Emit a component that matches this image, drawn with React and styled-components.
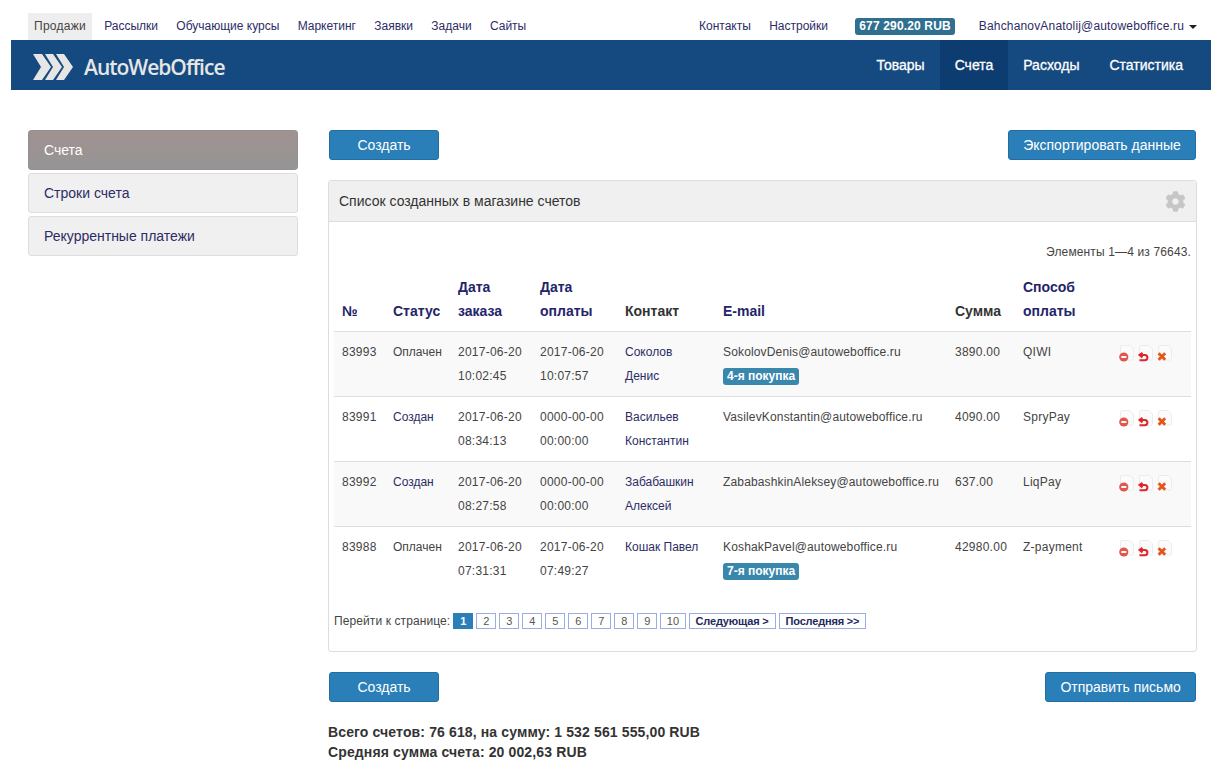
import React from 'react';
import styled, { createGlobalStyle } from 'styled-components';
import { FaCog } from 'react-icons/fa';

const GlobalStyle = createGlobalStyle`
    body {
        margin: 0;
        background: #fff;
        color: #333;
        font-family: "Liberation Sans", Arial, sans-serif;
        font-size: 12px;
    }
`;

const topLeft = ['Продажи', 'Рассылки', 'Обучающие курсы', 'Маркетинг', 'Заявки', 'Задачи', 'Сайты'];
const mainMenu = ['Товары', 'Счета', 'Расходы', 'Статистика'];
const pages = ['1', '2', '3', '4', '5', '6', '7', '8', '9', '10'];

const invoices = [
    { id: '83993', status: 'Оплачен', order: ['2017-06-20', '10:02:45'], paid: ['2017-06-20', '10:07:57'], contact: ['Соколов', 'Денис'], email: 'SokolovDenis@autoweboffice.ru', badge: '4-я покупка', sum: '3890.00', method: 'QIWI' },
    { id: '83991', status: 'Создан', order: ['2017-06-20', '08:34:13'], paid: ['0000-00-00', '00:00:00'], contact: ['Васильев', 'Константин'], email: 'VasilevKonstantin@autoweboffice.ru', sum: '4090.00', method: 'SpryPay' },
    { id: '83992', status: 'Создан', order: ['2017-06-20', '08:27:58'], paid: ['0000-00-00', '00:00:00'], contact: ['Забабашкин', 'Алексей'], email: 'ZababashkinAleksey@autoweboffice.ru', sum: '637.00', method: 'LiqPay' },
    { id: '83988', status: 'Оплачен', order: ['2017-06-20', '07:31:31'], paid: ['2017-06-20', '07:49:27'], contact: ['Кошак Павел'], email: 'KoshakPavel@autoweboffice.ru', badge: '7-я покупка', sum: '42980.00', method: 'Z-payment' },
];

const Logo = () => (
    <LogoBox>
        <svg width="41" height="26" viewBox="0 0 41 26">
            <path d="M0 0h9l9 13-9 13H0l8-13z" fill="#e6e6e6" />
            <path d="M12 0h8l9 13-9 13h-8l8-13z" fill="#e6e6e6" />
            <path d="M23 0h8l9 13-9 13h-8l8-13z" fill="#e6e6e6" />
        </svg>
        <LogoText>AutoWebOffice</LogoText>
    </LogoBox>
);

const PageIcon = ({ children }) => (
    <svg width="16" height="17" viewBox="0 0 16 17">
        <path d="M3 .5h8l3.5 3.5v9.5a1.5 1.5 0 0 1-1.5 1.5H3a1.5 1.5 0 0 1-1.5-1.5V2A1.5 1.5 0 0 1 3 .5z" fill="#fbfbfb" stroke="#ececec" />
        {children}
    </svg>
);

const RowActions = () => (
    <Actions>
        <PageIcon>
            <circle cx="4.8" cy="12" r="4.6" fill="#e2574c" />
            <rect x="2.3" y="11" width="5" height="2" fill="#fff" />
        </PageIcon>
        <PageIcon>
            <path d="M4.5 7.8L1.5 10l3 2.4M2.5 10h4.3a2.6 2.6 0 0 1 0 5.2H1.5" fill="none" stroke="#e0252b" strokeWidth="2" />
        </PageIcon>
        <PageIcon>
            <path d="M1.6 8.2l6.6 6.6M8.2 8.2l-6.6 6.6" fill="none" stroke="#e4561b" strokeWidth="2.8" />
        </PageIcon>
    </Actions>
);

const App = () => (
    <Page>
        <GlobalStyle />
        <TopBar>
            <TopGroup>
                {topLeft.map((item, i) => <TopLink key={item} active={i === 0}>{item}</TopLink>)}
            </TopGroup>
            <TopGroup>
                <TopLink>Контакты</TopLink>
                <TopLink>Настройки</TopLink>
                <Balance>677 290.20 RUB</Balance>
                <UserLink>BahchanovAnatolij@autoweboffice.ru<Caret /></UserLink>
            </TopGroup>
        </TopBar>
        <Header>
            <Logo />
            <MainMenu>
                {mainMenu.map((item, i) => <MainLink key={item} active={i === 1}>{item}</MainLink>)}
            </MainMenu>
        </Header>
        <Body>
            <Sidebar>
                <SideItem active>Счета</SideItem>
                <SideItem>Строки счета</SideItem>
                <SideItem>Рекуррентные платежи</SideItem>
            </Sidebar>
            <Content>
                <ButtonRow>
                    <Button wide>Создать</Button>
                    <Button>Экспортировать данные</Button>
                </ButtonRow>
                <Panel>
                    <PanelHead>
                        Список созданных в магазине счетов
                        <GearIcon><FaCog size={21} /></GearIcon>
                    </PanelHead>
                    <PanelBody>
                        <Summary>Элементы 1—4 из 76643.</Summary>
                        <Table>
                            <colgroup>
                                {[51, 65, 82, 85, 98, 232, 68, 86, 90].map((w, i) => <col key={i} width={w} />)}
                            </colgroup>
                            <thead>
                                <tr>
                                    <Th>№</Th>
                                    <Th>Статус</Th>
                                    <Th>Дата<br />заказа</Th>
                                    <Th>Дата<br />оплаты</Th>
                                    <Th plain>Контакт</Th>
                                    <Th>E-mail</Th>
                                    <Th plain>Сумма</Th>
                                    <Th>Способ<br />оплаты</Th>
                                    <Th />
                                </tr>
                            </thead>
                            <tbody>
                                {invoices.map((row, i) => (
                                    <Row key={row.id} odd={i % 2 === 0}>
                                        <Td spaced>{row.id}</Td>
                                        <Td link={row.status === 'Создан'}>{row.status}</Td>
                                        <Td spaced>{row.order[0]}<br />{row.order[1]}</Td>
                                        <Td spaced>{row.paid[0]}<br />{row.paid[1]}</Td>
                                        <Td link>{row.contact.map((n, j) => <div key={j}>{n}</div>)}</Td>
                                        <Td>
                                            <Email>{row.email}</Email>
                                            {row.badge && <div><Badge>{row.badge}</Badge></div>}
                                        </Td>
                                        <Td spaced>{row.sum}</Td>
                                        <Td spaced>{row.method}</Td>
                                        <Td><RowActions /></Td>
                                    </Row>
                                ))}
                            </tbody>
                        </Table>
                        <Pager>
                            <PagerLabel>Перейти к странице:</PagerLabel>
                            {pages.map((p, i) => <PageLink key={p} active={i === 0}>{p}</PageLink>)}
                            <PageLink wide>Следующая &gt;</PageLink>
                            <PageLink wide>Последняя &gt;&gt;</PageLink>
                        </Pager>
                    </PanelBody>
                </Panel>
                <ButtonRow>
                    <Button wide>Создать</Button>
                    <Button>Отправить письмо</Button>
                </ButtonRow>
                <Totals>
                    <div>Всего счетов: 76 618, на сумму: 1 532 561 555,00 RUB</div>
                    <div>Средняя сумма счета: 20 002,63 RUB</div>
                </Totals>
            </Content>
        </Body>
    </Page>
);

const Page = styled.div`
    width: 1200px;
    margin-left: 11px;
    height: 776px;
    overflow: hidden;
`;

const TopBar = styled.div`
    height: 40px;
    padding: 13px 14px 0 17px;
    box-sizing: border-box;
    display: flex;
    justify-content: space-between;
`;

const TopGroup = styled.div`
    display: flex;
    align-items: flex-start;
`;

const TopLink = styled.a`
    height: 27px;
    line-height: 26px;
    padding: 0 6px;
    margin-right: 6.3px;
    color: ${props => props.active ? '#444' : '#2c2c66'};
    background: ${props => props.active ? '#eee' : 'transparent'};
    font-size: 12px;
    letter-spacing: ${props => props.active ? '0.25px' : '0'};
    white-space: nowrap;
`;

const Balance = styled.span`
    margin: 5px 0 0 15px;
    height: 17px;
    line-height: 17px;
    padding: 0 4px;
    border-radius: 3px;
    background: #2f6f8f;
    color: #fff;
    font-size: 12px;
    font-weight: bold;
    letter-spacing: 0.15px;
    white-space: nowrap;
`;

const UserLink = styled.a`
    margin-left: 24px;
    line-height: 26px;
    color: #2c2c66;
    font-size: 12px;
    letter-spacing: 0.17px;
    white-space: nowrap;
`;

const Caret = styled.span`
    display: inline-block;
    margin-left: 5px;
    vertical-align: middle;
    border-top: 4px solid #222;
    border-left: 4px solid transparent;
    border-right: 4px solid transparent;
`;

const Header = styled.header`
    height: 50px;
    background: #154a80;
    display: flex;
    justify-content: space-between;
    padding-right: 13px;
`;

const LogoBox = styled.div`
    display: flex;
    align-items: center;
    gap: 10px;
    padding: 3px 0 0 22px;
`;

const LogoText = styled.span`
    font-family: "Open Sans", sans-serif;
    font-size: 21px;
    font-weight: 600;
    letter-spacing: -1px;
    color: #e6e6e6;
`;

const MainMenu = styled.nav`
    display: flex;
`;

const MainLink = styled.a`
    line-height: 50px;
    padding: 0 15px;
    color: #fff;
    font-size: 14px;
    -webkit-text-stroke: 0.3px #fff;
    background: ${props => props.active ? '#0d3c70' : 'transparent'};
`;

const Body = styled.div`
    display: flex;
    align-items: flex-start;
    padding: 40px 14px 0 17px;
`;

const Sidebar = styled.aside`
    width: 270px;
    flex: none;
    margin-right: 30px;
    display: flex;
    flex-direction: column;
    gap: 3px;
`;

const SideItem = styled.a`
    height: 40px;
    line-height: 38px;
    box-sizing: border-box;
    padding-left: 15px;
    border-radius: 3px;
    border: 1px solid ${props => props.active ? '#989090' : '#ddd'};
    background: ${props => props.active ? 'linear-gradient(#a09290, #959595)' : '#f0f0f0'};
    color: ${props => props.active ? '#fff' : '#2c2c66'};
    font-size: 14px;
`;

const Content = styled.main`
    width: 869px;
    flex: none;
`;

const ButtonRow = styled.div`
    display: flex;
    justify-content: space-between;
    padding: 0 1px;
`;

const Button = styled.button`
    height: 30px;
    box-sizing: border-box;
    width: ${props => props.wide ? '110px' : 'auto'};
    padding: 0 ${props => props.wide ? '0' : '14.2px'};
    border: 1px solid #1f6fa5;
    border-radius: 3px;
    background: #2a7fb8;
    color: #fff;
    font-family: inherit;
    font-size: 14px;
`;

const Panel = styled.section`
    margin: 20px 0;
    height: 472px;
    box-sizing: border-box;
    border: 1px solid #ddd;
    border-radius: 3px;
`;

const PanelHead = styled.div`
    position: relative;
    height: 41px;
    line-height: 40px;
    box-sizing: border-box;
    padding-left: 10px;
    background: #f0f0f0;
    border-bottom: 1px solid #ddd;
    font-size: 14px;
    color: #333;
`;

const GearIcon = styled.span`
    position: absolute;
    right: 10px;
    top: 10px;
    line-height: 0;
    color: #c6c6c6;
`;

const PanelBody = styled.div`
    padding: 0 5px;
`;

const Summary = styled.div`
    height: 50px;
    line-height: 60px;
    text-align: right;
    color: #444;
    letter-spacing: 0.14px;
`;

const Table = styled.table`
    width: 857px;
    table-layout: fixed;
    border-collapse: collapse;
`;

const Th = styled.th`
    padding: 0 8px 8px;
    height: 51px;
    vertical-align: bottom;
    text-align: left;
    font-size: 14px;
    line-height: 24px;
    color: ${props => props.plain ? '#333' : '#24246a'};
    border-bottom: 1px solid #ddd;
`;

const Row = styled.tr`
    background: ${props => props.odd ? '#f9f9f9' : '#fff'};

    td {
        border-bottom: 1px solid #ddd;
    }

    &:last-child td {
        border-bottom: none;
    }
`;

const Td = styled.td`
    height: 65px;
    box-sizing: border-box;
    padding: 8px 8px 0;
    vertical-align: top;
    line-height: 24px;
    font-size: 12px;
    white-space: nowrap;
    letter-spacing: ${props => props.spaced ? '0.25px' : '0'};
    color: ${props => props.link ? '#2c2c66' : '#444'};
`;

const Email = styled.span`
    letter-spacing: 0.15px;
`;

const Badge = styled.span`
    display: inline-block;
    height: 17px;
    line-height: 17px;
    padding: 0 4px;
    border-radius: 3px;
    background: #3a87ad;
    color: #fff;
    font-size: 12px;
    font-weight: bold;
`;

const Actions = styled.div`
    display: flex;
    gap: 3px;
    padding: 5px 0 0 10px;
`;

const Pager = styled.div`
    margin-top: 21px;
    display: flex;
    align-items: center;
    gap: 3px;
`;

const PagerLabel = styled.span`
    color: #444;
    line-height: 17px;
    letter-spacing: 0.1px;
`;

const PageLink = styled.a`
    box-sizing: border-box;
    height: 16px;
    line-height: 14px;
    padding: 0 ${props => props.wide ? '6px' : '5.5px'};
    min-width: 20px;
    text-align: center;
    border: 1px solid ${props => props.active ? '#2a7fb8' : '#9aaee0'};
    background: ${props => props.active ? '#2a7fb8' : '#fff'};
    color: ${props => props.active ? '#fff' : props.wide ? '#1c2a5c' : '#555'};
    font-size: 11px;
    font-weight: ${props => (props.active || props.wide) ? 'bold' : 'normal'};
    letter-spacing: ${props => props.wide ? '-0.18px' : '0'};
`;

const Totals = styled.div`
    margin-top: 20px;
    font-size: 14px;
    font-weight: bold;
    line-height: 20px;
    letter-spacing: 0.13px;
    color: #333;
`;

export default App;
